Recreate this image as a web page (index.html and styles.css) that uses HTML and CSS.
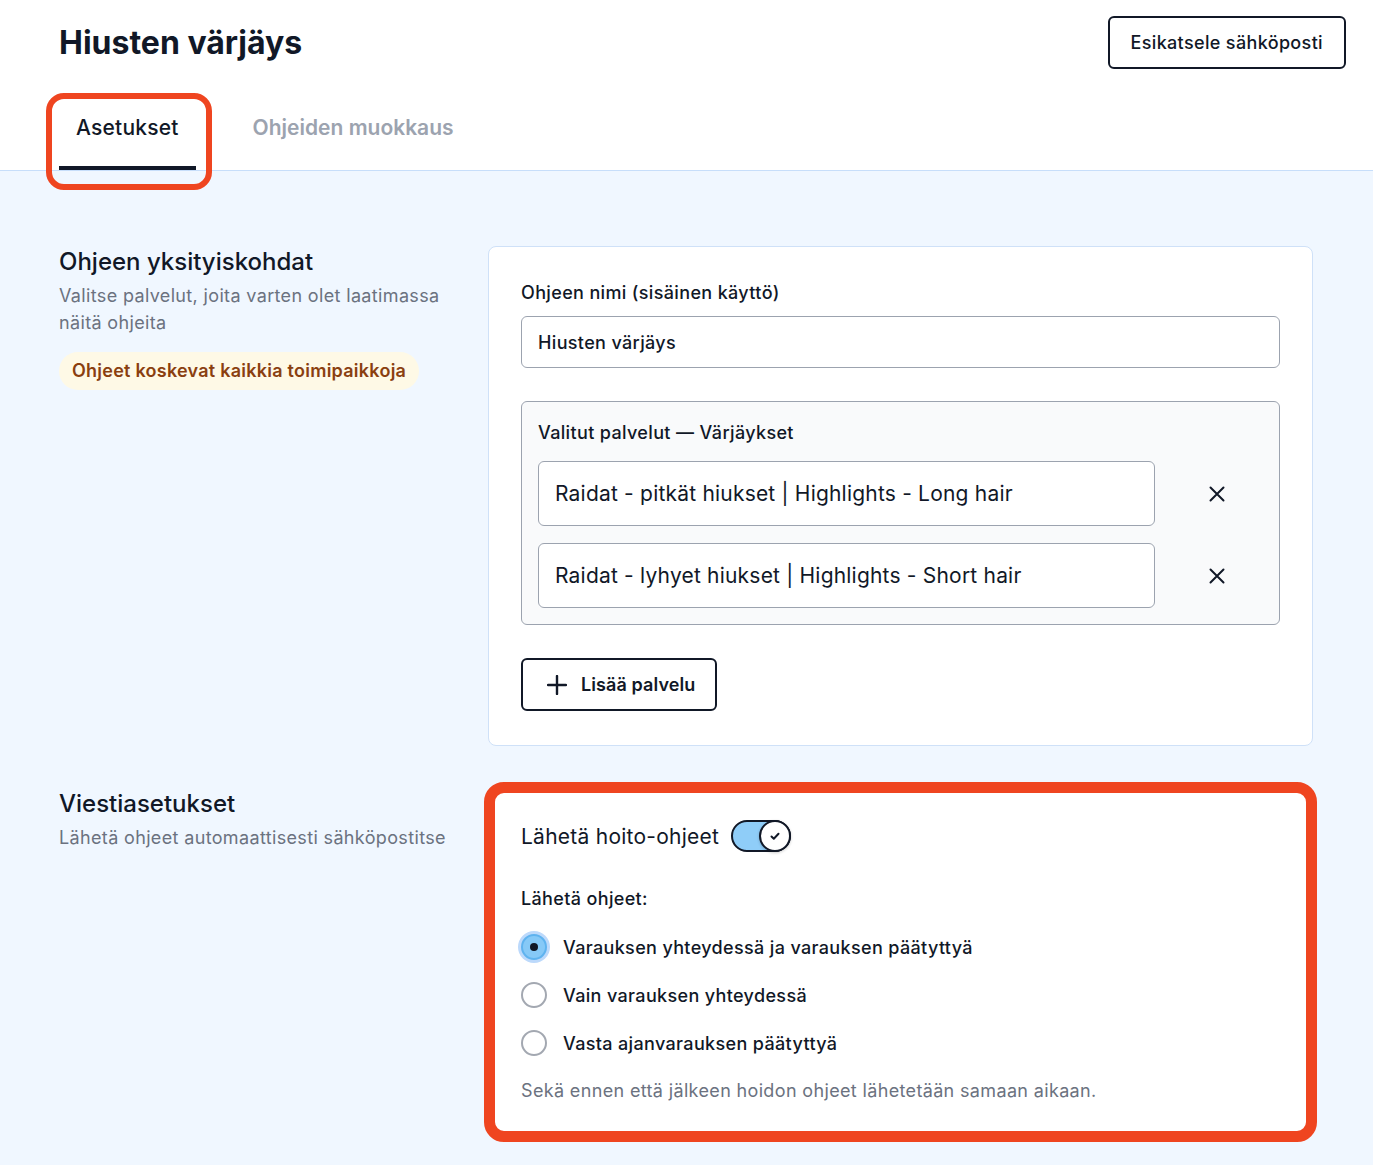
FILE: index.html
```html
<!DOCTYPE html>
<html lang="fi">
<head>
    <meta charset="UTF-8">
    <meta name="viewport" content="width=device-width, initial-scale=1.0">
    <title>Hiusten värjäys</title>
    <link rel="stylesheet" href="styles.css">
</head>
<body>
    <header class="page-header">
        <div class="header-row">
            <h1>Hiusten värjäys</h1>
            <button class="btn-outline" type="button">Esikatsele sähköposti</button>
        </div>
        <nav class="tabs">
            <a class="tab active highlight" href="#">Asetukset</a>
            <a class="tab" href="#">Ohjeiden muokkaus</a>
        </nav>
    </header>

    <main class="content">
        <section class="section">
            <div class="section-info">
                <h2>Ohjeen yksityiskohdat</h2>
                <p>Valitse palvelut, joita varten olet laatimassa näitä ohjeita</p>
                <span class="badge">Ohjeet koskevat kaikkia toimipaikkoja</span>
            </div>
            <div class="card">
                <label class="field-label" for="name">Ohjeen nimi (sisäinen käyttö)</label>
                <input class="text-input" type="text" id="name" value="Hiusten värjäys">

                <div class="services">
                    <div class="services-title">Valitut palvelut — Värjäykset</div>
                    <div class="service-row">
                        <div class="service-item">Raidat - pitkät hiukset | Highlights - Long hair</div>
                        <button class="remove-btn" type="button" aria-label="Poista">
                            <svg width="20" height="20" viewBox="0 0 20 20" fill="none" stroke="currentColor" stroke-width="2" stroke-linecap="round"><path d="M3.5 3.5l13 13M16.5 3.5l-13 13"/></svg>
                        </button>
                    </div>
                    <div class="service-row">
                        <div class="service-item">Raidat - lyhyet hiukset | Highlights - Short hair</div>
                        <button class="remove-btn" type="button" aria-label="Poista">
                            <svg width="20" height="20" viewBox="0 0 20 20" fill="none" stroke="currentColor" stroke-width="2" stroke-linecap="round"><path d="M3.5 3.5l13 13M16.5 3.5l-13 13"/></svg>
                        </button>
                    </div>
                </div>

                <button class="btn-outline btn-add" type="button">
                    <svg width="20" height="20" viewBox="0 0 20 20" fill="none" stroke="currentColor" stroke-width="2.4" stroke-linecap="round"><path d="M10 1v18M1 10h18"/></svg>
                    Lisää palvelu
                </button>
            </div>
        </section>

        <section class="section">
            <div class="section-info second">
                <h2>Viestiasetukset</h2>
                <p>Lähetä ohjeet automaattisesti sähköpostitse</p>
            </div>
            <div class="card highlight">
                <div class="toggle-row">
                    <span>Lähetä hoito-ohjeet</span>
                    <span class="toggle">
                        <span class="knob">
                            <svg width="12" height="12" viewBox="0 0 12 12" fill="none" stroke="currentColor" stroke-width="2" stroke-linecap="round" stroke-linejoin="round"><path d="M2.5 6.5l2.3 2.2L9.5 3.8"/></svg>
                        </span>
                    </span>
                </div>

                <div class="field-label send-label">Lähetä ohjeet:</div>
                <div class="radio-list">
                    <label class="radio"><span class="radio-dot checked"></span>Varauksen yhteydessä ja varauksen päätyttyä</label>
                    <label class="radio"><span class="radio-dot"></span>Vain varauksen yhteydessä</label>
                    <label class="radio"><span class="radio-dot"></span>Vasta ajanvarauksen päätyttyä</label>
                </div>
                <p class="note">Sekä ennen että jälkeen hoidon ohjeet lähetetään samaan aikaan.</p>
            </div>
        </section>
    </main>
</body>
</html>
```

FILE: styles.css
```css
* {
    box-sizing: border-box;
}
body {
    margin: 0;
    font-family: Inter, "Noto Sans", sans-serif;
    letter-spacing: 0.35px;
    color: #111827;
    background-color: #f0f7ff;
}
.page-header {
    background-color: white;
    padding: 16px 27px 0 59px;
    border-bottom: 1px solid #c7defa;
}
.header-row {
    display: flex;
    justify-content: space-between;
    align-items: center;
}
h1 {
    margin: 0;
    font-size: 32px;
    font-weight: 700;
    letter-spacing: 0;
}
.btn-outline {
    font-family: inherit;
    letter-spacing: inherit;
    background-color: white;
    color: #111827;
    border: 2px solid #111827;
    border-radius: 6px;
    font-size: 18px;
    font-weight: 500;
    height: 53px;
    padding: 0 21px;
    cursor: pointer;
}
.tabs {
    display: flex;
    gap: 40px;
    margin-top: 24px;
}
.tab {
    position: relative;
    padding: 21px 17px 24px;
    font-size: 21px;
    line-height: 28px;
    font-weight: 600;
    letter-spacing: 0;
    color: #9ca3af;
    text-decoration: none;
    border-bottom: 4px solid transparent;
}
.tab.active {
    color: #111827;
    font-weight: 500;
    letter-spacing: 0.2px;
    border-bottom-color: #111827;
}
.tab.highlight::after {
    content: "";
    position: absolute;
    top: 0;
    left: -13px;
    right: -16px;
    bottom: -24px;
    border: 6px solid #ef4520;
    border-radius: 18px;
    z-index: 2;
}
.content {
    padding: 75px 60px 40px 59px;
    display: flex;
    flex-direction: column;
    gap: 39px;
}
.section {
    display: grid;
    grid-template-columns: minmax(0, 1fr) 825px;
    gap: 32px;
    align-items: start;
}
.section-info.second {
    padding-top: 3px;
}
.section-info h2 {
    margin: 0;
    font-size: 24px;
    line-height: 32px;
    font-weight: 500;
    letter-spacing: 0;
}
.section-info p {
    margin: 4px 0 0;
    font-size: 18px;
    line-height: 27px;
    color: #6b7280;
}
.badge {
    display: inline-block;
    margin-top: 16px;
    padding: 6px 13px;
    border-radius: 19px;
    background-color: #fef9e6;
    color: #8a3f10;
    font-size: 18px;
    line-height: 26px;
    font-weight: 600;
    letter-spacing: 0.25px;
}
.card {
    position: relative;
    background-color: white;
    border: 1px solid #cfe1f8;
    border-radius: 8px;
    padding: 34px 32px;
}
.card.highlight::after {
    content: "";
    position: absolute;
    top: -4px;
    left: -5px;
    right: -5px;
    bottom: -5px;
    border: 11px solid #ef4520;
    border-radius: 20px;
}
.field-label {
    display: block;
    font-size: 18px;
    line-height: 24px;
    font-weight: 500;
    margin-bottom: 11px;
}
.text-input {
    display: block;
    width: 100%;
    height: 52px;
    padding: 0 16px;
    font-family: inherit;
    letter-spacing: inherit;
    font-size: 18px;
    font-weight: 500;
    color: #111827;
    border: 1px solid #9ca3af;
    border-radius: 6px;
}
.services {
    margin-top: 33px;
    background-color: #f9fafb;
    border: 1px solid #9ca3af;
    border-radius: 6px;
    padding: 17px 16px 16px;
}
.services-title {
    font-size: 18px;
    line-height: 28px;
    font-weight: 500;
    margin-bottom: 14px;
}
.service-row {
    display: flex;
    align-items: center;
}
.service-row + .service-row {
    margin-top: 17px;
}
.service-item {
    width: 617px;
    height: 65px;
    display: flex;
    align-items: center;
    padding: 0 16px;
    font-size: 21px;
    letter-spacing: 0.2px;
    background-color: white;
    border: 1px solid #9ca3af;
    border-radius: 6px;
}
.remove-btn {
    margin-left: 40px;
    width: 44px;
    height: 44px;
    display: flex;
    align-items: center;
    justify-content: center;
    border: none;
    background: none;
    color: #111827;
    padding: 0;
    cursor: pointer;
}
.btn-add {
    margin-top: 33px;
    display: inline-flex;
    align-items: center;
    gap: 14px;
    padding: 0 19px 0 24px;
    font-weight: 600;
    letter-spacing: 0.1px;
}
.toggle-row {
    display: flex;
    align-items: center;
    gap: 12px;
    font-size: 21px;
    letter-spacing: 0.25px;
    height: 32px;
}
.toggle {
    position: relative;
    width: 60px;
    height: 32px;
    border: 2px solid #111827;
    border-radius: 16px;
    background-color: #8fcdf8;
}
.knob {
    position: absolute;
    top: -2px;
    right: -2px;
    width: 32px;
    height: 32px;
    border: 2px solid #111827;
    border-radius: 50%;
    background-color: white;
    display: flex;
    align-items: center;
    justify-content: center;
    box-shadow: 0 1px 3px rgba(0,0,0,0.2);
}
.send-label {
    margin: 35px 0 23px;
}
.radio-list {
    display: flex;
    flex-direction: column;
    gap: 22px;
}
.radio {
    display: flex;
    align-items: center;
    gap: 16px;
    font-size: 18px;
    font-weight: 500;
    height: 26px;
}
.radio-dot {
    width: 26px;
    height: 26px;
    border: 2px solid #a3a8b1;
    border-radius: 50%;
    background-color: white;
    display: flex;
    align-items: center;
    justify-content: center;
}
.radio-dot.checked {
    background-color: #86c9f7;
    border-color: #5fb3ef;
    box-shadow: 0 0 0 3px #bcd9fb;
}
.radio-dot.checked::after {
    content: "";
    width: 8px;
    height: 8px;
    border-radius: 50%;
    background-color: #111827;
}
.note {
    margin: 23px 0 0;
    font-size: 18px;
    line-height: 24px;
    color: #6b7280;
}
```
